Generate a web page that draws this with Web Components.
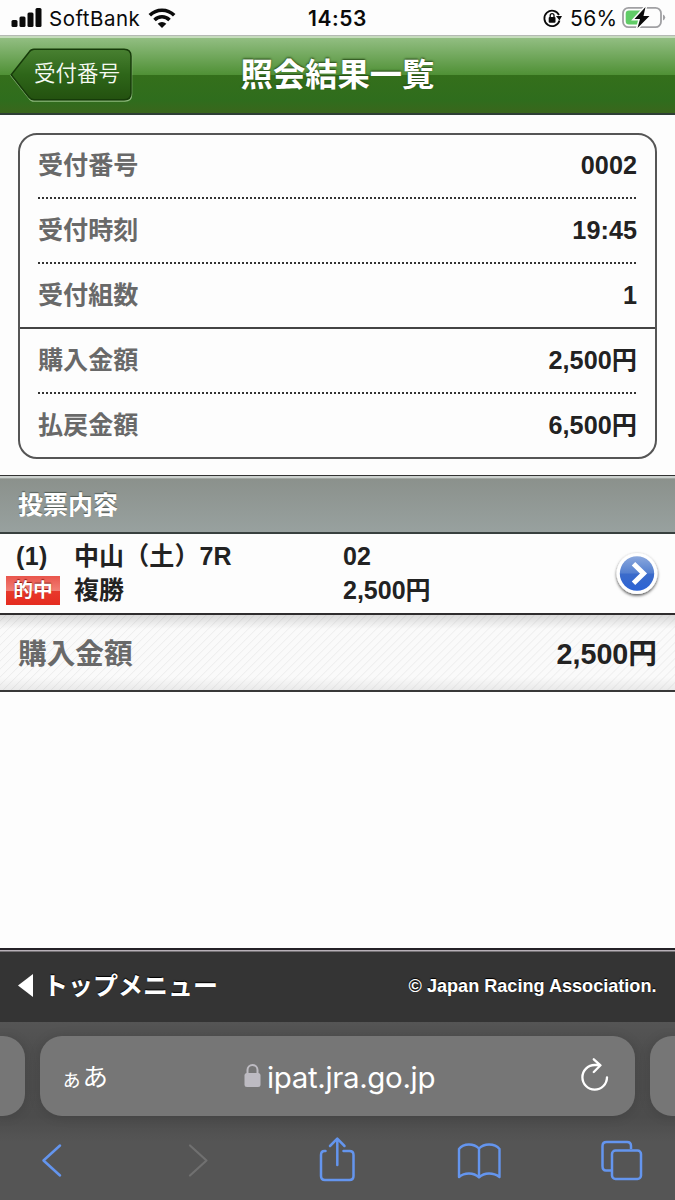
<!DOCTYPE html>
<html lang="ja">
<head>
<meta charset="utf-8">
<title>照会結果一覧</title>
<style>
html,body{margin:0;padding:0}
body{width:675px;height:1200px;overflow:hidden;background:#fdfdfd;color:#222;font:bold 25px "Liberation Sans","Noto Sans CJK JP",sans-serif}
</style>
</head>
<body>
<ipat-app></ipat-app>
<script>
const define = (name, html) => {
  const t = document.createElement('template');
  t.innerHTML = '<style>*{box-sizing:border-box}:host{display:block;box-sizing:border-box;white-space:nowrap}svg{display:block;flex:none}</style>' + html;
  customElements.define(name, class extends HTMLElement {
    constructor() {
      super();
      this.attachShadow({ mode: 'open' }).appendChild(t.content.cloneNode(true));
    }
  });
};

define('status-bar', `
<style>
:host{height:35px;display:grid;grid-template-columns:1fr 60px 1fr;align-items:start;color:#0a0a0a;font:400 20.5px/37px Inter,"Liberation Sans",sans-serif}
.l,.r{display:flex;align-items:center;height:37px}
.l{padding-left:11px}.r{justify-content:flex-end;padding-right:9px}
.t{font-weight:600;font-size:21px;letter-spacing:.6px;text-align:center}
.c{width:92px;margin-left:7px;font-size:20.5px;letter-spacing:.5px}
.p{width:46px;margin:0 6px 0 9px;font-size:21px;letter-spacing:.4px}
svg{margin-top:-2px}
</style>
<div class="l">
<svg width="31" height="19" viewBox="0 0 31 19"><g fill="#0a0a0a"><rect x=".5" y="12" width="6" height="7" rx="1.5"/><rect x="8.5" y="8.5" width="6" height="10.500" rx="1.500"/><rect x="16.500" y="4.500" width="6" height="14.500" rx="1.500"/><rect x="24.500" y="0" width="6" height="19" rx="1.500"/></g></svg>
<span class="c">SoftBank</span>
<svg width="28" height="20" viewBox="0 0 28 20" style="margin-left:7px"><g fill="none" stroke="#0a0a0a" stroke-width="3.500"><path d="M1.800 7.300a17 17 0 0 1 24.400 0"/><path d="M6.500 12a10.500 10.500 0 0 1 15 0"/></g><path d="M14 20l-4.300-4.300a6 6 0 0 1 8.600 0z" fill="#0a0a0a"/></svg>
</div>
<div class="t">14:53</div>
<div class="r">
<svg width="20" height="19" viewBox="0 0 20 19" style="margin:0 -2px 0 0"><path d="M16.500 11.500A7.700 7.700 0 1 1 16 6" fill="none" stroke="#0a0a0a" stroke-width="1.800"/><path d="M13 7h6l-2.500 4.500z" fill="#0a0a0a"/><rect x="5.700" y="8" width="6.800" height="5.800" rx="1" fill="#0a0a0a"/><path d="M7.200 8V6.500a1.900 1.900 0 0 1 3.800 0V8" fill="none" stroke="#0a0a0a" stroke-width="1.300"/></svg>
<span class="p">56%</span>
<svg width="44" height="23" viewBox="0 0 44 23"><rect x="1" y="1.800" width="38" height="19.400" rx="5.500" fill="none" stroke="#a0a0a3" stroke-width="1.800"/><path d="M41 8.500q2.200 1 2.200 3t-2.200 3z" fill="#a0a0a3"/><path d="M7 4.500h13v14H7a3.300 3.300 0 0 1-3.300-3.300V7.800A3.300 3.300 0 0 1 7 4.500z" fill="#61cc67"/><path d="M23.500 1L12.500 13H18l-2.500 9L27.500 10H21.500z" fill="#0a0a0a" stroke="#fdfdfd" stroke-width="3" paint-order="stroke"/></svg>
</div>`);

define('back-button', `
<style>
:host{width:122px;height:56px;position:relative}
svg{position:absolute;left:0;top:0}
span{position:relative;display:block;padding:3px 0 0 24px;font-size:21.500px;font-weight:350;line-height:49px;color:#f6faf3}
</style>
<svg width="124" height="56" viewBox="0 0 124 56"><defs><linearGradient id="g" x2="0" y2="1"><stop stop-color="#488031"/><stop offset=".5" stop-color="#2e6619"/><stop offset="1" stop-color="#23510f"/></linearGradient></defs>
<path d="M24 2H115Q121.500 2 121.500 8.500V46.500Q121.500 53 115 53H24Q21 53 19 50L1 27.500L19 5Q21 2 24 2z" fill="none" stroke="#8db87c" stroke-width="1.500" transform="translate(0 1)"/>
<path d="M24 1.500H114Q121 1.500 121 8.500V45.500Q121 52 114 52H24Q21 52 19 49.500L1.200 27L19 4.500Q21 1.500 24 1.500z" fill="url(#g)" stroke="#163b09" stroke-width="1.500" transform="translate(0 .7)"/></svg>
<span><slot></slot></span>`);

define('title-bar', `
<style>
:host{height:80px;display:grid;grid-template-columns:141px 1fr 141px;align-items:start;padding-top:12px;background:linear-gradient(#b5b9b4 0 1px,#c6dcbd 1px 2.500px,#92be82 3px,#4f9035 40px,#346f1b 40.500px,#2f6d1d 65px,#3a661c 78px,#2e3e35 78.500px)}
slot[name=back]{display:block;padding-left:10px}
h1{margin:2px 0 0;text-align:center;font-size:32.300px;line-height:53px;color:#fff;text-shadow:0 -1px 2px #254716}
</style>
<slot name="back"></slot><h1><slot></slot></h1>`);

define('info-card', `
<style>:host{margin:18px 18px 0;height:326px;border:2px solid #555;border-radius:19px;display:grid;grid-template-rows:64px repeat(4,65px)}</style><slot></slot>`);

define('info-row', `
<style>
:host{padding:0 18px;height:100%}
div{height:100%;display:flex;justify-content:space-between;line-height:61px;background:linear-gradient(90deg,#333 2px,#3330 2px) 0 100%/4px 2px repeat-x}
span{color:#696969;font-size:25.100px}
:host([solid]){border-bottom:2px solid #444}
:host([solid]) div,:host([last]) div{background:none}
:host(:not([first])) div{line-height:63px}
b{font-weight:bold;font-size:25.200px;letter-spacing:.05px}
</style>
<div><span><slot name="label"></slot></span><b><slot></slot></b></div>`);

define('section-bar', `
<style>:host{margin-top:16px;height:59px;padding-left:18px;line-height:61px;color:#fff;text-shadow:0 -1px 1px #535b56;border-bottom:2px solid #38403f;background:linear-gradient(#333 0 1.500px,#cbd0cd 1.500px 2.500px,#8b918c 4px,#98a19f)}</style><slot></slot>`);

define('hit-badge', `
<style>:host{width:54px;height:29px;text-align:center;font-size:19.800px;line-height:28px;color:#fff;text-shadow:0 -1px 1px #8a1611;background:linear-gradient(#e9554c,#f17e75 50%,#e8382b 53%,#e52c20)}</style><slot></slot>`);

define('bet-row', `
<style>
:host{height:81px;display:grid;grid-template-columns:74px 269px 1fr 60px;grid-template-rows:34px 34px;line-height:34px;padding-top:5px;border-bottom:2px solid #2e2c2d}
.n{padding-left:16px;letter-spacing:.4px}
.b{padding:3px 0 0 6px}
.r{letter-spacing:.1px}
.go{grid-column:4;grid-row:1/3}
</style>
<span class="n"><slot name="no"></slot></span><span class="r"><slot name="race"></slot></span><span><slot name="horse"></slot></span>
<svg class="go" width="50" height="52" viewBox="0 0 50 52" style="margin:9px 0 0 -3px"><defs><linearGradient id="b" x2="0" y2="1"><stop stop-color="#8ba8dd"/><stop offset=".48" stop-color="#5580d0"/><stop offset=".52" stop-color="#3b6bca"/><stop offset="1" stop-color="#2c63d5"/></linearGradient><filter id="s" x="-30%" y="-30%" width="160%" height="170%"><feDropShadow dx="0" dy="1.500" stdDeviation="1.500" flood-opacity=".7"/></filter></defs><circle cx="25" cy="25.500" r="20.500" fill="#fff" filter="url(#s)"/><circle cx="25" cy="25.500" r="17.200" fill="url(#b)"/><path d="M21.500 15.800L31.500 25.500L21.500 35.200" fill="none" stroke="#fff" stroke-width="5"/></svg>
<div class="b"><slot name="badge"></slot></div><span><slot name="type"></slot></span><span><slot name="amount"></slot></span>`);

define('total-row', `
<style>
:host{height:77px;display:flex;justify-content:space-between;padding:0 18px;font-size:28.700px;line-height:78px;border-bottom:2px solid #383838;background:linear-gradient(#0002,#0000 14px,#0000 62px,#0001),repeating-linear-gradient(135deg,#fafafa 0 3.500px,#ededed 4.300px,#fafafa 5.100px 5.660px)}
span{color:#696969}b{font-weight:bold}
</style><span><slot name="label"></slot></span><b><slot></slot></b>`);

define('site-footer', `
<style>
:host{margin-top:256px;height:74px;padding:1px 18.500px 0 18px;display:flex;align-items:center;color:#fff;background:linear-gradient(#242127 0 1.800px,#b8b1b8 2px 3px,#343434 4px);text-shadow:0 -1px 1px #000}
.m{display:flex;align-items:center;gap:10px;flex:1;line-height:66px}
.c{font-size:18.100px;line-height:66px}
</style>
<div class="m"><svg width="15" height="23" viewBox="0 0 15 23"><path d="M15 0V23L0 11.500z" fill="#fff"/></svg><slot></slot></div><div class="c"><slot name="copy"></slot></div>`);

define('browser-chrome', `
<style>
:host{height:178px;background:linear-gradient(#555,#4e4e4e 30px,#4c4c4c 95px,#555 120px,#555);font-weight:400;color:#fff}
.tabs{display:grid;grid-template-columns:25px 595px 25px;gap:15px;padding-top:14px}
.tabs>div{height:79.500px;background:#767676;box-shadow:0 1px 12px #0002}
.a{border-radius:0 22px 22px 0}.z{border-radius:22px 0 0 22px}
.u{border-radius:22px;display:grid;grid-template-columns:204px 1fr 41px;align-items:center}
.k{padding:3px 0 0 21px;display:flex;align-items:baseline;font-size:25.500px;line-height:76px}
.k small{font-size:21px;width:21.500px}
.h{display:flex;align-items:center;font:400 29.500px/78px Inter,sans-serif;letter-spacing:-.35px}
.u>svg{margin:-3px 0 0 -14px}
.nav{height:84px;display:grid;grid-template-columns:40px 107px 20px 112px 36px 102px 44px 98px 43px;padding:21.500px 0 0 32px}
.nav svg{height:46px;overflow:visible}
</style>
<div class="tabs"><div class="a"></div><div class="u"><div class="k"><small>ぁ</small><span>あ</span></div>
<div class="h"><svg width="17" height="25" viewBox="0 0 17 25" style="margin:-2px 6px 0 0"><rect x=".5" y="10" width="16" height="14" rx="2.500" fill="#bdbbc2"/><path d="M3.500 11V7a5 5 0 0 1 10 0v4" fill="none" stroke="#bdbbc2" stroke-width="2"/></svg><span>ipat.jra.go.jp</span></div>
<svg width="30" height="34" viewBox="0 0 30 34"><path d="M27 19.300A12.300 12.300 0 1 1 14.700 7H20M13.800 1.300L20.500 7.300L13.800 14" fill="none" stroke="#fff" stroke-width="2.300" stroke-linecap="round" stroke-linejoin="round"/></svg></div><div class="z"></div></div>
<div class="nav">
<svg width="40" viewBox="32 1137 40 46"><path d="M60 1145.500L43.500 1160.500L60 1175.500" fill="none" stroke="#6495ee" stroke-width="2.500" stroke-linecap="round" stroke-linejoin="round"/></svg><i></i>
<svg width="20" viewBox="179 1137 20 46" style="margin-left:9px"><path d="M181 1145.500L197.500 1160.500L181 1175.500" fill="none" stroke="#707070" stroke-width="2.200" stroke-linecap="round" stroke-linejoin="round"/></svg><i></i>
<svg width="36" viewBox="317.500 1137 36 46"><path d="M332 1151H331Q327.500 1151 327.500 1155V1176Q327.500 1180 331.500 1180H356Q360 1180 360 1176V1155Q360 1151 356 1151H350M343.800 1165V1139M336.500 1146L343.800 1138.700L351 1146" fill="none" stroke="#6495ee" stroke-width="2.500" stroke-linecap="round" stroke-linejoin="round"/></svg><i></i>
<svg width="44" viewBox="449 1137 44 46"><path d="M479 1148.500Q475 1144.500 469 1144.500Q462.500 1144.500 459 1149V1177Q463 1173.500 469 1173.500Q475 1173.500 479 1177.500Q483 1173.500 489 1173.500Q495 1173.500 499.500 1177V1149Q496 1144.500 489 1144.500Q483 1144.500 479 1148.500V1177.500" fill="none" stroke="#6495ee" stroke-width="2.400" stroke-linejoin="round"/></svg><i></i>
<svg width="43" viewBox="591 1137 43 46"><g fill="none" stroke="#6495ee" stroke-width="2.500"><path d="M611 1170.500H606Q602.500 1170.500 602.500 1166V1146Q602.500 1142 606.500 1142H627Q631 1142 631 1146V1149"/><rect x="612" y="1150.500" width="29" height="28.500" rx="3.500"/></g></svg>
</div>`);

define('ipat-app', `
<style>:host{width:675px;height:1200px;overflow:hidden}</style>
<status-bar></status-bar>
<title-bar><back-button slot="back">受付番号</back-button>照会結果一覧</title-bar>
<info-card>
<info-row first><span slot="label">受付番号</span>0002</info-row>
<info-row><span slot="label">受付時刻</span>19:45</info-row>
<info-row solid><span slot="label">受付組数</span>1</info-row>
<info-row><span slot="label">購入金額</span>2,500円</info-row>
<info-row last><span slot="label">払戻金額</span>6,500円</info-row>
</info-card>
<section-bar>投票内容</section-bar>
<bet-row><span slot="no">(1)</span><span slot="race">中山（土）7R</span><span slot="horse">02</span><hit-badge slot="badge">的中</hit-badge><span slot="type">複勝</span><span slot="amount">2,500円</span></bet-row>
<total-row><span slot="label">購入金額</span>2,500円</total-row>
<site-footer>トップメニュー<span slot="copy">© Japan Racing Association.</span></site-footer>
<browser-chrome></browser-chrome>`);
</script>
</body>
</html>
